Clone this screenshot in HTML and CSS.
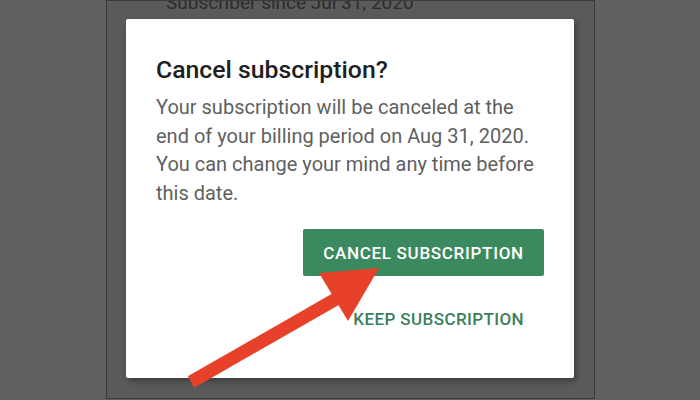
FILE: index.html
```html
<!DOCTYPE html>
<html>
<head>
<meta charset="utf-8">
<link rel="stylesheet" href="styles.css">
</head>
<body>
<div class="page">
  <div class="screen">
    <div class="behind">Subscriber since Jul 31, 2020</div>
    <div class="dialog">
      <h1 class="title">Cancel subscription?</h1>
      <p class="message">Your subscription will be canceled at the end of your billing period on Aug 31, 2020. You can change your mind any time before this date.</p>
      <div class="actions">
        <button class="btn btn-primary">CANCEL SUBSCRIPTION</button>
        <button class="btn btn-text">KEEP SUBSCRIPTION</button>
      </div>
    </div>
  </div>
  <svg class="arrow" width="700" height="400" viewBox="0 0 700 400">
    <line x1="191" y1="382" x2="336" y2="299" stroke="#e8412a" stroke-width="13"/>
    <polygon points="319,273 379,268 348,321" fill="#e8412a"/>
  </svg>
</div>
</body>
</html>
```
FILE: styles.css
```css
* { box-sizing: border-box; }
html, body { margin: 0; padding: 0; }
body {
  background: #606060;
  font-family: Roboto, "Noto Sans", "Liberation Sans", sans-serif;
  width: 700px;
  height: 400px;
  overflow: hidden;
}
.page {
  position: relative;
  width: 700px;
  height: 400px;
  display: flex;
}
.screen {
  margin-left: 106px;
  width: 489px;
  height: 399px;
  border: 1px solid #3b3b3b;
  background: #5a5a5a;
  overflow: hidden;
  display: flex;
  flex-direction: column;
}
.behind {
  margin-top: -8px;
  margin-left: 59px;
  font-size: 19px;
  line-height: 19px;
  color: #2c2c2c;
  white-space: nowrap;
}
.dialog {
  margin-top: 7px;
  margin-left: 19px;
  width: 448px;
  height: 359px;
  background: #ffffff;
  border-radius: 2px;
  box-shadow: 2px 3px 6px rgba(0,0,0,0.35);
  padding: 35px 30px 0 30px;
  display: flex;
  flex-direction: column;
}
.title {
  margin: 0;
  font-size: 24.8px;
  line-height: 32px;
  font-weight: 500;
  color: #202020;
}
.message {
  margin: 7px 0 0 0;
  font-size: 20px;
  line-height: 28.5px;
  color: #5f5f5f;
}
.actions {
  margin-top: 22px;
  display: flex;
  flex-direction: column;
  align-items: flex-end;
  gap: 19px;
}
.btn {
  font-family: Roboto, "Noto Sans", "Liberation Sans", sans-serif;
  font-size: 17px;
  font-weight: 500;
  letter-spacing: 0.7px;
  height: 47px;
  padding: 0 20px;
  border: none;
  border-radius: 2px;
  cursor: pointer;
}
.btn-primary {
  background: #3b8a5f;
  color: #ffffff;
  width: 241px;
}
.btn-text {
  background: transparent;
  color: #3b7f5a;
  letter-spacing: 0.4px;
  padding-right: 20px;
}
.arrow {
  position: absolute;
  left: 0;
  top: 0;
  pointer-events: none;
}
```
